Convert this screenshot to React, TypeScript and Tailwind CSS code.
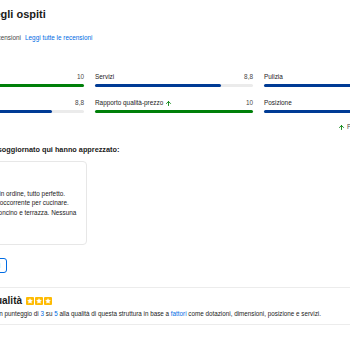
import { ArrowUp, Star } from "lucide-react";

const scores = [
  { label: "Personale", value: "10", pct: 100, high: false },
  { label: "Servizi", value: "8,8", pct: 80, high: false },
  { label: "Pulizia", value: "9,4", pct: 94, high: false },
  { label: "Comfort", value: "8,8", pct: 80, high: false },
  { label: "Rapporto qualità-prezzo", value: "10", pct: 100, high: true },
  { label: "Posizione", value: "9,2", pct: 92, high: false },
];

function ScoreBar({ label, value, pct, high }: { label: string; value: string; pct: number; high: boolean }) {
  const green = pct >= 100;
  return (
    <div>
      <div className="flex items-center justify-between leading-[10px] text-[6.4px] text-[#1a1a1a]">
        <span className="flex items-center gap-[2px]">
          {label}
          {high && <ArrowUp className="w-[7px] h-[7px] text-[#008009]" strokeWidth={3} />}
        </span>
        <span className="text-[#474747]">{value}</span>
      </div>
      <div className="mt-[2px] h-[3px] rounded-full bg-[#ebebeb]">
        <div
          className={`h-[3px] rounded-full ${green ? "bg-[#008009]" : "bg-[#003b95]"}`}
          style={{ width: `${pct}%` }}
        />
      </div>
    </div>
  );
}

export default function App() {
  return (
    <div className="w-[350px] h-[350px] overflow-hidden bg-white" style={{ fontFamily: '"Liberation Sans", Arial, sans-serif' }}>
      <div className="-ml-[74px] w-[496px] pt-[7px]">
        <h1 className="text-[11px] leading-[14px] font-bold text-[#1a1a1a]">Recensioni degli ospiti</h1>

        <div className="mt-[12px] flex items-center gap-[4px] leading-[10px] text-[6.4px]">
          <span className="w-[17px] h-[10px] rounded-[2px] bg-[#003b95] text-white font-bold flex items-center justify-center">9,2</span>
          <span className="text-[#1a1a1a] font-bold">Favoloso</span>
          <span className="text-[#474747]">· 27 recensioni</span>
          <a className="text-[#006ce4]">Leggi tutte le recensioni</a>
        </div>

        <div className="mt-[29px] grid grid-cols-3 gap-x-[11px] gap-y-[11px]">
          {scores.map((s) => (
            <ScoreBar key={s.label} {...s} />
          ))}
        </div>

        <div className="mt-[9px] flex justify-end items-center gap-[2px] leading-[10px] text-[6.4px] text-[#474747]">
          <ArrowUp className="w-[7px] h-[7px] text-[#008009]" strokeWidth={3} />
          <span>Punteggio alto per Firenze</span>
        </div>

        <h2 className="mt-[13px] text-[7.3px] leading-[10px] font-bold text-[#1a1a1a]">
          Gli ospiti che hanno soggiornato qui hanno apprezzato:
        </h2>

        <div className="mt-[6px] w-[161px] h-[84px] rounded-[4px] border border-[#e7e7e7] p-[8px]">
          <div className="h-[16px] mb-[3px] flex items-center gap-[4px]">
            <div className="w-[14px] h-[14px] rounded-full bg-[#0071c2] text-white text-[6px] font-bold flex items-center justify-center">G</div>
            <div className="text-[6.4px] leading-[8px]">
              <div className="font-bold text-[#1a1a1a]">Giulia</div>
              <div className="text-[#474747]">Italia</div>
            </div>
          </div>
          <div className="text-[6.4px] leading-[9.4px] text-[#1a1a1a] whitespace-nowrap">
            <div>Appartamento pulito e in ordine, tutto perfetto.</div>
            <div>Cucina fornita di tutto l'occorrente per cucinare.</div>
            <div>Molto bello pure il balconcino e terrazza. Nessuna</div>
          </div>
        </div>

        <button className="mt-[13px] h-[15px] w-[81px] rounded-[3px] border border-[#006ce4] text-[6.4px] text-[#006ce4] flex items-center justify-center">
          Leggi tutte le recensioni
        </button>

        <div className="mt-[14px] rounded-[4px] border border-[#ececec] pl-[5px] pt-[7px] pb-[5px]">
          <div className="flex items-center gap-[4px] leading-[12px]">
            <span className="text-[10px] font-bold text-[#1a1a1a]">Valutazione qualità</span>
            <span className="flex gap-[1px]">
              {[0, 1, 2].map((i) => (
                <span key={i} className="w-[8px] h-[8px] rounded-[1px] bg-[#febb02] flex items-center justify-center">
                  <Star className="w-[6px] h-[6px] text-white fill-white" strokeWidth={1} />
                </span>
              ))}
            </span>
          </div>
          <p className="mt-[2px] text-[6.3px] leading-[10px] text-[#1a1a1a] whitespace-nowrap">
            Booking.com assegna un punteggio di <a className="text-[#006ce4]">3</a> su <a className="text-[#006ce4]">5</a> alla qualità di questa struttura in base a <a className="text-[#006ce4]">fattori</a> come dotazioni, dimensioni, posizione e servizi.
          </p>
        </div>
      </div>
    </div>
  );
}
